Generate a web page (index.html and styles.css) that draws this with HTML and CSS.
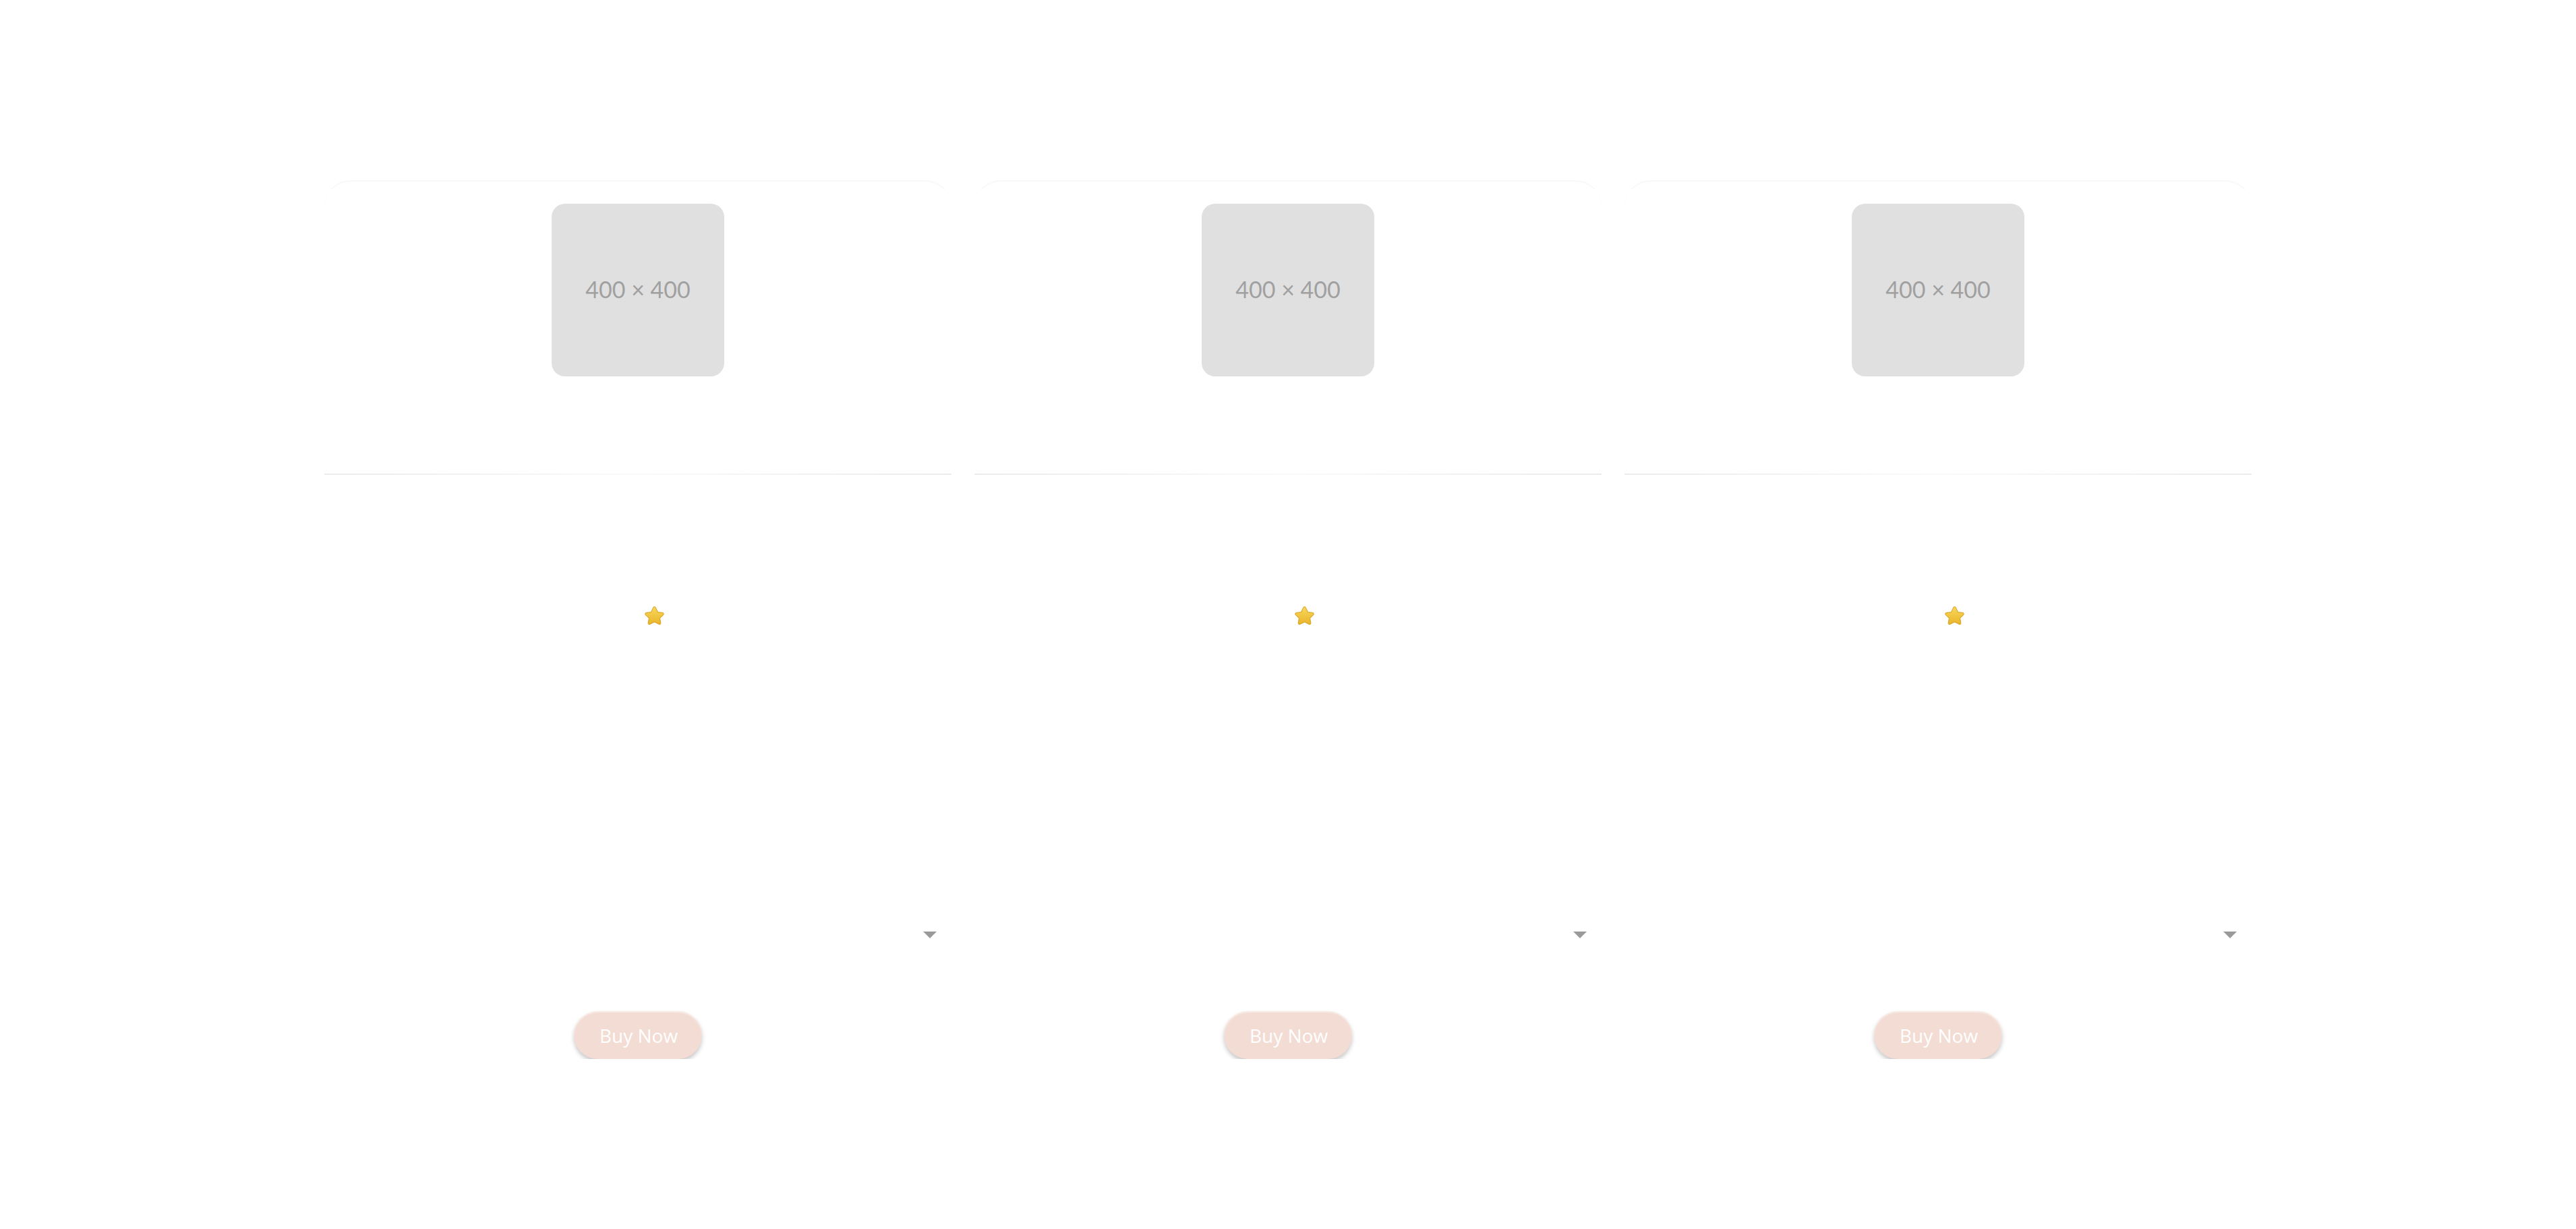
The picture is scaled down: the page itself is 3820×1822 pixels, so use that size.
FILE: index.html
```html
<!DOCTYPE html>
<html lang="en">
<head>
<meta charset="utf-8">
<title>Products</title>
<link rel="stylesheet" href="styles.css">
</head>
<body>
<main class="grid">
  <article class="card">
    <div class="media"><div class="ph">400 × 400</div></div>
    <div class="divider"></div>
    <div class="body">
      <div class="rating">
        <svg class="star" viewBox="0 0 32 32" aria-hidden="true"><defs><linearGradient id="sg1" x1="0" y1="0" x2="0" y2="1"><stop offset="0" stop-color="#f9d75a"/><stop offset="1" stop-color="#e9b52c"/></linearGradient></defs><path d="M16 2.5c.9 0 1.5.6 1.9 1.5l2.9 6.1 6.6.9c1.9.3 2.5 1.9 1.2 3.2l-4.8 4.6 1.2 6.6c.3 1.9-1.1 2.9-2.8 2l-6.2-3.2-6.2 3.2c-1.7.9-3.1-.1-2.8-2l1.2-6.6-4.8-4.6c-1.3-1.3-.7-2.9 1.2-3.2l6.6-.9 2.9-6.1c.4-.9 1-1.5 1.9-1.5z" fill="url(#sg1)" stroke="#d9a21f" stroke-width="1"/></svg>
      </div>
      <div class="select"><span class="arrow"></span></div>
      <button class="buy">Buy Now</button>
    </div>
  </article>
  <article class="card">
    <div class="media"><div class="ph">400 × 400</div></div>
    <div class="divider"></div>
    <div class="body">
      <div class="rating">
        <svg class="star" viewBox="0 0 32 32" aria-hidden="true"><defs><linearGradient id="sg2" x1="0" y1="0" x2="0" y2="1"><stop offset="0" stop-color="#f9d75a"/><stop offset="1" stop-color="#e9b52c"/></linearGradient></defs><path d="M16 2.5c.9 0 1.5.6 1.9 1.5l2.9 6.1 6.6.9c1.9.3 2.5 1.9 1.2 3.2l-4.8 4.6 1.2 6.6c.3 1.9-1.1 2.9-2.8 2l-6.2-3.2-6.2 3.2c-1.7.9-3.1-.1-2.8-2l1.2-6.6-4.8-4.6c-1.3-1.3-.7-2.9 1.2-3.2l6.6-.9 2.9-6.1c.4-.9 1-1.5 1.9-1.5z" fill="url(#sg2)" stroke="#d9a21f" stroke-width="1"/></svg>
      </div>
      <div class="select"><span class="arrow"></span></div>
      <button class="buy">Buy Now</button>
    </div>
  </article>
  <article class="card">
    <div class="media"><div class="ph">400 × 400</div></div>
    <div class="divider"></div>
    <div class="body">
      <div class="rating">
        <svg class="star" viewBox="0 0 32 32" aria-hidden="true"><defs><linearGradient id="sg3" x1="0" y1="0" x2="0" y2="1"><stop offset="0" stop-color="#f9d75a"/><stop offset="1" stop-color="#e9b52c"/></linearGradient></defs><path d="M16 2.5c.9 0 1.5.6 1.9 1.5l2.9 6.1 6.6.9c1.9.3 2.5 1.9 1.2 3.2l-4.8 4.6 1.2 6.6c.3 1.9-1.1 2.9-2.8 2l-6.2-3.2-6.2 3.2c-1.7.9-3.1-.1-2.8-2l1.2-6.6-4.8-4.6c-1.3-1.3-.7-2.9 1.2-3.2l6.6-.9 2.9-6.1c.4-.9 1-1.5 1.9-1.5z" fill="url(#sg3)" stroke="#d9a21f" stroke-width="1"/></svg>
      </div>
      <div class="select"><span class="arrow"></span></div>
      <button class="buy">Buy Now</button>
    </div>
  </article>
</main>
</body>
</html>
```
FILE: styles.css
```css
html, body {
  margin: 0;
  padding: 0;
  background: #ffffff;
}
body {
  font-family: "Open Sans", "Noto Sans", sans-serif;
}
.grid {
  width: 2860px;
  margin: 268px auto 0;
  display: grid;
  grid-template-columns: repeat(3, 1fr);
  gap: 32px;
}
.card {
  display: flex;
  flex-direction: column;
  border-top: 1px solid #f7f7f7;
  border-left: 1px solid transparent;
  border-right: 1px solid transparent;
  border-radius: 40px 40px 0 0;
  background: #fff;
  box-shadow: 0 -1px 1px rgba(0, 0, 0, 0.02);
}
.media {
  height: 433px;
  display: flex;
  justify-content: center;
  align-items: flex-start;
  padding-top: 33px;
  box-sizing: border-box;
}
.ph {
  width: 256px;
  height: 256px;
  border-radius: 20px;
  background: #e0e0e0;
  color: #a0a0a0;
  font-family: Lato, "Open Sans", sans-serif;
  font-size: 34px;
  line-height: 1;
  padding-bottom: 2px;
  box-sizing: border-box;
  display: flex;
  align-items: center;
  justify-content: center;
}
.divider {
  height: 2px;
  background: linear-gradient(to right, #ebebeb, #fafafa 50%, #ebebeb);
}
.body {
  display: flex;
  flex-direction: column;
  align-items: center;
}
.rating {
  margin-top: 193px;
  height: 32px;
  display: flex;
  justify-content: center;
}
.star {
  width: 33px;
  height: 33px;
  margin-left: 48px;
}
.select {
  align-self: stretch;
  height: 60px;
  margin-top: 427px;
  display: flex;
  justify-content: flex-end;
  align-items: center;
  padding-right: 22px;
}
.arrow {
  width: 0;
  height: 0;
  border-left: 10px solid transparent;
  border-right: 10px solid transparent;
  border-top: 10px solid #9a9a9a;
}
.buy {
  margin-top: 83px;
  width: 190px;
  height: 71px;
  border: none;
  border-radius: 36px;
  background: #f3dcd3;
  color: #ffffff;
  font-family: "Open Sans", "Noto Sans", sans-serif;
  font-size: 28px;
  box-shadow: 0 4px 6px rgba(0, 0, 0, 0.22), inset 0 2px 2px rgba(255, 255, 255, 0.5);
  padding: 0 0 0 2px;
}
```
